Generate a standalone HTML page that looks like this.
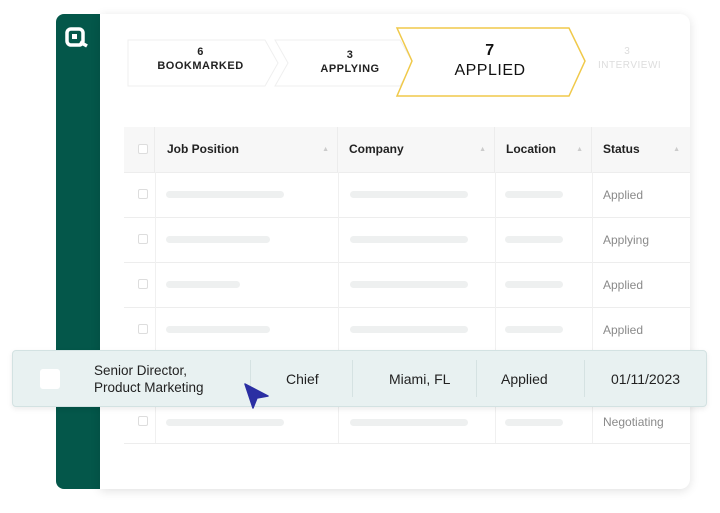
<!DOCTYPE html>
<html><head><style>
*{margin:0;padding:0;box-sizing:border-box}
body{width:720px;height:513px;background:#fff;position:relative;overflow:hidden;font-family:"Liberation Sans",sans-serif}
.side{position:absolute;left:56px;top:14px;width:46px;height:475px;background:#04574a;border-radius:8px 0 0 8px}
.card{position:absolute;left:100px;top:14px;width:590px;height:475px;background:#fff;border-radius:0 10px 10px 0;box-shadow:0 2px 10px rgba(0,0,0,.12)}
.a{position:absolute}
.th{position:absolute;top:127px;height:45px;background:#f7f7f7;font-size:12px;font-weight:bold;color:#222;line-height:45px;border-right:1px solid #ececec}
.bar{position:absolute;height:7px;background:#eef0f0;border-radius:4px}
.st{position:absolute;left:603px;font-size:12px;color:#8a8a8a}
.hl{position:absolute;left:604px}
.cb{position:absolute;left:138px;width:10px;height:10px;border:1px solid #ddd;border-radius:2px}
.rl{position:absolute;left:124px;width:566px;height:1px;background:#ededed}
.vl{position:absolute;width:1px;background:#f0f0f0}
</style></head><body>
<div class="side"></div>
<svg class="a" style="left:65px;top:27px" width="26" height="22" viewBox="0 0 26 22"><rect x="2" y="2" width="16" height="16" rx="4" fill="none" stroke="#fff" stroke-width="3.5"/><rect x="7" y="7" width="5" height="5" fill="#fff"/><path d="M15 15 L22 19" stroke="#fff" stroke-width="3.5"/></svg>
<div class="card"></div>
<svg class="a" style="left:120px;top:25px" width="580" height="76">
<path d="M8 15 H145 L158 38 L145 61 H8 Z" fill="#fff" stroke="#efefef"/>
<path d="M155 15 H280 L293 38 L280 61 H155 L168 38 Z" fill="#fff" stroke="#efefef"/>
<path d="M277 3 H449 L465 36 L449 71 H277 L292 36 Z" fill="#fff" stroke="#f0c94a" stroke-width="1.5"/>
</svg>
<div class="a" style="left:128px;top:45px;width:145px;text-align:center;font-size:11px;font-weight:bold;color:#222;line-height:14px;letter-spacing:.5px">6<br>BOOKMARKED</div>
<div class="a" style="left:285px;top:48px;width:130px;text-align:center;font-size:11px;font-weight:bold;color:#222;line-height:14px;letter-spacing:.5px">3<br>APPLYING</div>
<div class="a" style="left:410px;top:41px;width:160px;text-align:center;font-size:16px;color:#111;line-height:20px;letter-spacing:.5px"><b>7</b><br>APPLIED</div>
<div class="a" style="left:598px;top:45px;font-size:10px;color:#ddd;line-height:14px;letter-spacing:.5px">&nbsp;&nbsp;&nbsp;&nbsp;&nbsp;&nbsp;&nbsp;&nbsp;3<br>INTERVIEWI</div>
<div class="th" style="left:124px;width:31px"><span class="cb" style="left:14px;top:17px;background:#fff"></span></div>
<div class="th" style="left:155px;width:183px;padding-left:12px">Job Position<span style="position:absolute;right:8px;color:#ccc;font-size:7px">▲</span></div>
<div class="th" style="left:338px;width:157px;padding-left:11px">Company<span style="position:absolute;right:8px;color:#ccc;font-size:7px">▲</span></div>
<div class="th" style="left:495px;width:97px;padding-left:11px">Location<span style="position:absolute;right:8px;color:#ccc;font-size:7px">▲</span></div>
<div class="th" style="left:592px;width:98px;padding-left:11px;border-right:0">Status<span style="position:absolute;right:10px;color:#ccc;font-size:7px">▲</span></div>
<div class="rl" style="top:172px"></div><div class="rl" style="top:217px"></div><div class="rl" style="top:262px"></div><div class="rl" style="top:307px"></div><div class="rl" style="top:443px"></div>
<div class="vl" style="left:155px;top:172px;height:271px"></div><div class="vl" style="left:338px;top:172px;height:271px"></div><div class="vl" style="left:495px;top:172px;height:271px"></div><div class="vl" style="left:592px;top:172px;height:271px"></div>
<div class="cb" style="top:189px"></div><div class="bar" style="left:166px;top:191px;width:118px"></div><div class="bar" style="left:350px;top:191px;width:118px"></div><div class="bar" style="left:505px;top:191px;width:58px"></div><div class="st" style="top:188px">Applied</div>
<div class="cb" style="top:234px"></div><div class="bar" style="left:166px;top:236px;width:104px"></div><div class="bar" style="left:350px;top:236px;width:118px"></div><div class="bar" style="left:505px;top:236px;width:58px"></div><div class="st" style="top:233px">Applying</div>
<div class="cb" style="top:279px"></div><div class="bar" style="left:166px;top:281px;width:74px"></div><div class="bar" style="left:350px;top:281px;width:118px"></div><div class="bar" style="left:505px;top:281px;width:58px"></div><div class="st" style="top:278px">Applied</div>
<div class="cb" style="top:324px"></div><div class="bar" style="left:166px;top:326px;width:104px"></div><div class="bar" style="left:350px;top:326px;width:118px"></div><div class="bar" style="left:505px;top:326px;width:58px"></div><div class="st" style="top:323px">Applied</div>
<div class="cb" style="top:416px"></div><div class="bar" style="left:166px;top:419px;width:118px"></div><div class="bar" style="left:350px;top:419px;width:118px"></div><div class="bar" style="left:505px;top:419px;width:58px"></div><div class="st" style="top:415px">Negotiating</div>
<div class="a" style="left:12px;top:350px;width:695px;height:57px;background:#e8f1f1;border:1px solid #d3e2e2;border-radius:4px;box-shadow:0 2px 6px rgba(0,0,0,.08)"></div>
<div class="a" style="left:40px;top:369px;width:20px;height:20px;background:#fff;border-radius:3px"></div>
<div class="a" style="left:94px;top:362px;font-size:13.5px;line-height:17px;color:#222">Senior Director,<br>Product Marketing</div>
<div class="a" style="left:250px;top:360px;width:1px;height:37px;background:#d5e2e2"></div>
<div class="a" style="left:352px;top:360px;width:1px;height:37px;background:#d5e2e2"></div>
<div class="a" style="left:476px;top:360px;width:1px;height:37px;background:#d5e2e2"></div>
<div class="a" style="left:584px;top:360px;width:1px;height:37px;background:#d5e2e2"></div>
<div class="a" style="left:286px;top:371px;font-size:14px;color:#222">Chief</div>
<div class="a" style="left:389px;top:371px;font-size:14px;color:#222">Miami, FL</div>
<div class="a" style="left:501px;top:371px;font-size:14px;color:#222">Applied</div>
<div class="a" style="left:611px;top:371px;font-size:14px;color:#222">01/11/2023</div>
<svg class="a" style="left:242px;top:381px" width="30" height="30"><path d="M3 3 L26 15 L15 17 L11 27 Z" fill="#2b2fa3" stroke="#2b2fa3" stroke-linejoin="round" stroke-width="1.5"/></svg>
</body></html>
